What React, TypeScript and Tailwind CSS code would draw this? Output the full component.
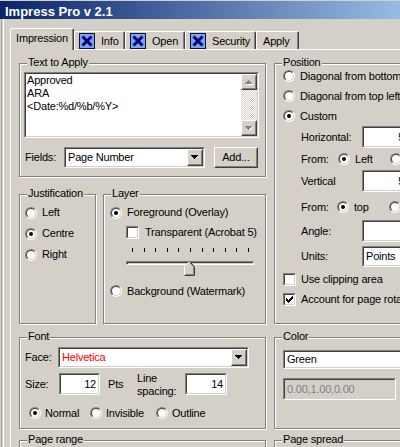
import React from 'react';

type Box = { children?: React.ReactNode; className?: string };

// classic 3D borders
function Sunken({ children, className = '', inner = 'bg-white' }: Box & { inner?: string }) {
  return (
    <div className={`border border-t-[#808080] border-l-[#808080] border-b-white border-r-white ${className}`}>
      <div className={`w-full h-full border border-t-[#404040] border-l-[#404040] border-b-[#d4d0c8] border-r-[#d4d0c8] ${inner}`}>
        {children}
      </div>
    </div>
  );
}

function Raised({ children, className = '' }: Box) {
  return (
    <div className={`border border-t-white border-l-white border-b-[#404040] border-r-[#404040] bg-[#d4d0c8] ${className}`}>
      <div className="w-full h-full border border-t-[#d4d0c8] border-l-[#d4d0c8] border-b-[#808080] border-r-[#808080] flex items-center justify-center">
        {children}
      </div>
    </div>
  );
}

function Arrow({ up = false, grey = false }: { up?: boolean; grey?: boolean }) {
  const rows = up ? [[3, 1], [2, 3], [1, 5], [0, 7]] : [[0, 7], [1, 5], [2, 3], [3, 1]];
  return (
    <svg width="8" height="5" viewBox="0 0 8 5" shapeRendering="crispEdges">
      {grey && rows.map(([x, w], i) => <rect key={'s' + i} x={x + 1} y={i + 1} width={w} height={1} fill="#fff" />)}
      {rows.map(([x, w], i) => <rect key={i} x={x} y={i} width={w} height={1} fill={grey ? '#808080' : '#000'} />)}
    </svg>
  );
}

function Radio({ checked = false }: { checked?: boolean }) {
  return (
    <div className="w-[12px] h-[12px] shrink-0 rounded-full border border-t-[#808080] border-l-[#808080] border-b-white border-r-white">
      <div className="w-full h-full rounded-full border border-t-[#404040] border-l-[#404040] border-b-[#d4d0c8] border-r-[#d4d0c8] bg-white flex items-center justify-center">
        {checked && <div className="w-[4px] h-[4px] rounded-full bg-black" />}
      </div>
    </div>
  );
}

const tick = ['......X', '.....XX', 'X...XXX', 'XX.XXX.', 'XXXXX..', '.XXX...', '..X....'];

function Check({ checked = false }: { checked?: boolean }) {
  return (
    <Sunken className="w-[13px] h-[13px] shrink-0">
      {checked && (
        <svg width="9" height="9" viewBox="0 0 9 9" shapeRendering="crispEdges">
          {tick.flatMap((row, y) =>
            row.split('').map((c, x) => (c === 'X' ? <rect key={`${x}-${y}`} x={x + 1} y={y + 1} width={1} height={1} fill="#000" /> : null))
          )}
        </svg>
      )}
    </Sunken>
  );
}

function Combo({ value, className = '', red = false }: { value: string; className?: string; red?: boolean }) {
  return (
    <Sunken className={className}>
      <div className="flex h-full">
        <span className={`flex-1 flex items-center pl-[2px] whitespace-nowrap ${red ? 'text-[#ff0000]' : ''}`}>{value}</span>
        <Raised className="w-[16px] h-full shrink-0">
          <Arrow />
        </Raised>
      </div>
    </Sunken>
  );
}

function Field({ value = '', className = '', right = false }: { value?: string; className?: string; right?: boolean }) {
  return (
    <Sunken className={`h-[22px] ${className}`}>
      <div className={`h-full flex items-center ${right ? 'justify-end pr-[2px]' : 'pl-[2px]'}`}>{value}</div>
    </Sunken>
  );
}

function Group({ title, className = '', children }: Box & { title: string }) {
  return (
    <div className={`relative shrink-0 border border-[#808080] shadow-[inset_1px_1px_0_#fff,1px_1px_0_#fff] ${className}`}>
      <span className="absolute -top-[8px] left-[7px] px-[1px] bg-[#d4d0c8] whitespace-nowrap">{title}</span>
      {children}
    </div>
  );
}

function XIcon() {
  return (
    <svg width="16" height="16" viewBox="0 0 16 16" className="shrink-0">
      <rect x="0.5" y="0.5" width="15" height="15" fill="#7aa5ea" stroke="#10103a" />
      <path d="M3.5 3.5L12.5 12.5M12.5 3.5L3.5 12.5" stroke="#000080" strokeWidth="3" />
    </svg>
  );
}

const tabs = [
  { label: 'Info', w: 'w-[51px]' },
  { label: 'Open', w: 'w-[60px]' },
  { label: 'Security', w: 'w-[71px]' },
];

function Tabs() {
  return (
    <div className="flex items-end h-[21px]">
      <div className="relative z-10 -mb-[1px] h-[22px] w-[64px] bg-[#d4d0c8] border-l border-t border-r border-l-white border-t-white border-r-[#404040] rounded-t-[2px] shadow-[inset_-1px_0_0_#808080] flex items-center justify-center pb-[2px]">
        Impression
      </div>
      {tabs.map(t => (
        <div
          key={t.label}
          className={`${t.w} h-[18px] border-l border-t border-r border-l-white border-t-white border-r-[#404040] rounded-t-[2px] shadow-[inset_-1px_0_0_#808080] flex items-center gap-[6px] pl-[4px] pt-[1px]`}
        >
          <XIcon />
          <span>{t.label}</span>
        </div>
      ))}
      <div className="w-[43px] h-[18px] border-l border-t border-r border-l-white border-t-white border-r-[#404040] rounded-t-[2px] shadow-[inset_-1px_0_0_#808080] flex items-center pl-[6px] pt-[1px]">
        Apply
      </div>
    </div>
  );
}

export default function App() {
  return (
    <div className="w-[400px] h-[447px] overflow-hidden bg-[#d4d0c8] text-[11px] leading-[13px] tracking-[-0.2px] text-black font-['Liberation_Sans',Arial,sans-serif]">
      {/* Title bar */}
      <div className="h-[1px] bg-[#d4d0c8]" />
      <div className="h-[18px] bg-[linear-gradient(90deg,#0a246a_0px,#a6caf0_440px)] pl-[5px] pt-[4px] text-white font-bold text-[13px] leading-[13px] tracking-normal whitespace-nowrap">
        Impress Pro v 2.1
      </div>

      <div className="flex h-[428px]">
        <div className="w-[1px]" />
        <div className="w-[1px] bg-[#a8a49c]" />
        <div className="w-[1px]" />
        <div className="w-[1px] bg-white" />
        <div className="flex-1 min-w-0 pl-[6px] pt-[9px] flex flex-col">
          <Tabs />

          {/* Tab page */}
          <div className="flex-1 border-l border-t border-white pl-[8px] pt-[13px]">
            <div className="flex gap-[8px] items-start">
              <div className="w-[247px] shrink-0">
                <Group title="Text to Apply" className="w-[247px] h-[114px]">
                  <Sunken className="ml-[4px] mt-[8px] w-[235px] h-[66px]">
                    <div className="flex h-full">
                      <div className="flex-1 pl-[1px]">
                        <div>Approved</div>
                        <div>ARA</div>
                        <div>&lt;Date:%d/%b/%Y&gt;</div>
                      </div>
                      <div className="w-[16px] flex flex-col">
                        <Raised className="h-[16px]">
                          <Arrow up grey />
                        </Raised>
                        <div className="flex-1 bg-[repeating-conic-gradient(#ffffff_0%_25%,#d4d0c8_0%_50%)] [background-size:2px_2px]" />
                        <Raised className="h-[16px]">
                          <Arrow grey />
                        </Raised>
                      </div>
                    </div>
                  </Sunken>
                  <div className="ml-[4px] mt-[9px] flex items-center h-[21px]">
                    <span className="w-[40px] pl-[1px]">Fields:</span>
                    <Combo value="Page Number" className="w-[141px] h-[21px]" />
                    <Raised className="ml-[9px] w-[44px] h-[21px]">Add...</Raised>
                  </div>
                </Group>

                <div className="mt-[17px] flex gap-[7px]">
                  <Group title="Justification" className="w-[77px] h-[130px]">
                    <div className="mt-[7px] pl-[5px]">
                      {['Left', 'Centre', 'Right'].map((t, i) => (
                        <div key={t} className="h-[21px] flex items-center gap-[5px]">
                          <Radio checked={i === 1} />
                          <span>{t}</span>
                        </div>
                      ))}
                    </div>
                  </Group>

                  <Group title="Layer" className="w-[163px] h-[130px]">
                    <div className="mt-[7px] pl-[6px] h-[21px] flex items-center gap-[5px]">
                      <Radio checked />
                      <span className="whitespace-nowrap">Foreground (Overlay)</span>
                    </div>
                    <div className="pl-[22px] h-[18px] flex items-center gap-[6px]">
                      <Check />
                      <span className="whitespace-nowrap">Transparent (Acrobat 5)</span>
                    </div>
                    <div className="mt-[7px] ml-[28px] w-[117px] h-[4px] flex justify-between">
                      {Array.from({ length: 11 }, (_, i) => (
                        <div key={i} className="w-[1px] h-full bg-black" />
                      ))}
                    </div>
                    <div className="relative ml-[22px] w-[128px] h-[15px]">
                      <div className="mt-[9px] h-[4px] border border-t-[#808080] border-l-[#808080] border-b-white border-r-white bg-[#d4d0c8] shadow-[inset_1px_1px_0_#404040]" />
                      <svg width="11" height="15" viewBox="0 0 11 15" className="absolute left-[58px] top-0">
                        <polygon points="5.5,0.5 0.5,5.5 0.5,14.5 10.5,14.5 10.5,5.5" fill="#d4d0c8" />
                        <polyline points="0.5,14 0.5,5.5 5.5,0.5" stroke="#fff" fill="none" />
                        <polyline points="5.5,0.5 10.5,5.5 10.5,14.5 0.5,14.5" stroke="#404040" fill="none" />
                        <polyline points="6,2 9.5,5.8 9.5,13.5 1.5,13.5" stroke="#808080" fill="none" />
                      </svg>
                    </div>
                    <div className="mt-[5px] pl-[6px] h-[20px] flex items-center gap-[5px]">
                      <Radio />
                      <span className="whitespace-nowrap">Background (Watermark)</span>
                    </div>
                  </Group>
                </div>
              </div>

              <Group title="Position" className="w-[180px] h-[261px]">
                <div className="mt-[2px] pl-[8px]">
                  {['Diagonal from bottom left', 'Diagonal from top left', 'Custom'].map((t, i) => (
                    <div key={t} className="h-[20px] flex items-center gap-[5px]">
                      <Radio checked={i === 2} />
                      <span className="whitespace-nowrap">{t}</span>
                    </div>
                  ))}
                </div>
                <div className="pl-[26px]">
                  <div className="h-[22px] flex items-center">
                    <span className="w-[61px]">Horizontal:</span>
                    <Field value="50" right className="w-[52px]" />
                  </div>
                  <div className="h-[22px] flex items-center">
                    <span className="w-[37px]">From:</span>
                    <div className="w-[52px] flex items-center gap-[5px]">
                      <Radio checked />
                      <span>Left</span>
                    </div>
                    <div className="flex items-center gap-[5px]">
                      <Radio />
                      <span>Right</span>
                    </div>
                  </div>
                  <div className="h-[22px] flex items-center">
                    <span className="w-[61px]">Vertical</span>
                    <Field value="50" right className="w-[52px]" />
                  </div>
                  <div className="mt-[4px] h-[22px] flex items-center">
                    <span className="w-[36px]">From:</span>
                    <div className="w-[52px] flex items-center gap-[5px]">
                      <Radio checked />
                      <span>top</span>
                    </div>
                    <div className="flex items-center gap-[5px]">
                      <Radio />
                      <span>bottom</span>
                    </div>
                  </div>
                  <div className="mt-[2px] h-[22px] flex items-center">
                    <span className="w-[61px]">Angle:</span>
                    <Field className="w-[60px]" />
                  </div>
                  <div className="mt-[4px] h-[21px] flex items-center">
                    <span className="w-[61px]">Units:</span>
                    <Combo value="Points" className="w-[80px] h-[21px]" />
                  </div>
                </div>
                <div className="pl-[8px]">
                  <div className="mt-[3px] h-[18px] flex items-center gap-[5px]">
                    <Check />
                    <span className="whitespace-nowrap">Use clipping area</span>
                  </div>
                  <div className="mt-[2px] h-[18px] flex items-center gap-[5px]">
                    <Check checked />
                    <span className="whitespace-nowrap">Account for page rotation</span>
                  </div>
                </div>
              </Group>
            </div>

            <div className="mt-[13px] flex gap-[8px]">
              <Group title="Font" className="w-[247px] h-[92px]">
                <div className="mt-[9px] pl-[5px] h-[21px] flex items-center">
                  <span className="w-[33px]">Face:</span>
                  <Combo value="Helvetica" red className="w-[191px] h-[21px]" />
                </div>
                <div className="mt-[5px] pl-[5px] h-[22px] flex items-center">
                  <span className="w-[34px]">Size:</span>
                  <Field value="12" right className="w-[41px]" />
                  <span className="ml-[8px] w-[29px]">Pts</span>
                  <span className="w-[48px] pt-[2px]">
                    Line
                    <br />
                    spacing:
                  </span>
                  <Field value="14" right className="w-[42px]" />
                </div>
                <div className="mt-[8px] pl-[9px] h-[20px] flex items-center">
                  <div className="w-[61px] flex items-center gap-[4px]">
                    <Radio checked />
                    <span>Normal</span>
                  </div>
                  <div className="w-[66px] flex items-center gap-[4px]">
                    <Radio />
                    <span>Invisible</span>
                  </div>
                  <div className="flex items-center gap-[4px]">
                    <Radio />
                    <span>Outline</span>
                  </div>
                </div>
              </Group>

              <Group title="Color" className="w-[180px] h-[92px]">
                <Sunken className="mt-[12px] ml-[8px] w-[140px] h-[19px]">
                  <div className="h-full flex items-center pl-[2px]">Green</div>
                </Sunken>
                <Sunken className="mt-[9px] ml-[8px] w-[113px] h-[22px]" inner="bg-[#d4d0c8]">
                  <div className="h-full flex items-center pl-[2px] text-[#808080]">0.00,1.00,0.00</div>
                </Sunken>
              </Group>
            </div>

            <div className="mt-[11px] flex gap-[8px]">
              <Group title="Page range" className="w-[247px] h-[40px]" />
              <Group title="Page spread" className="w-[180px] h-[40px]" />
            </div>
          </div>
        </div>
      </div>
    </div>
  );
}
